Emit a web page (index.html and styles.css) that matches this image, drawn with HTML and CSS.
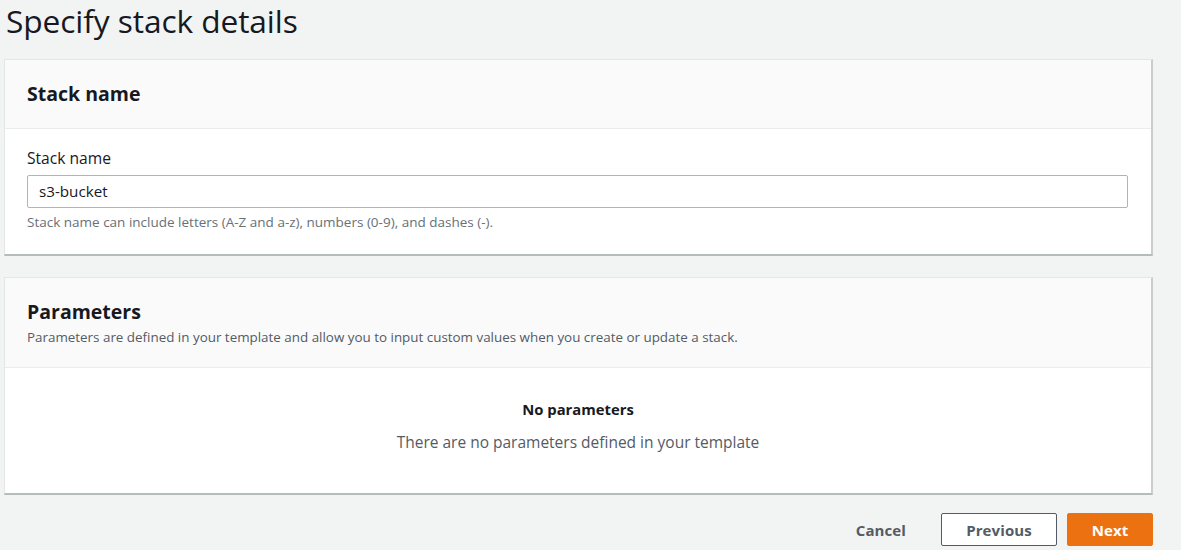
FILE: index.html
```html
<!DOCTYPE html>
<html>
<head>
<meta charset="utf-8">
<link rel="stylesheet" href="styles.css">
</head>
<body>
<div class="page">
  <h1 class="title">Specify stack details</h1>

  <section class="card">
    <div class="card-header">
      <h2 class="card-title">Stack name</h2>
    </div>
    <div class="card-body">
      <label class="field-label">Stack name</label>
      <div class="input">s3-bucket</div>
      <div class="hint">Stack name can include letters (A-Z and a-z), numbers (0-9), and dashes (-).</div>
    </div>
  </section>

  <section class="card card-params">
    <div class="card-header">
      <h2 class="card-title">Parameters</h2>
      <div class="card-desc">Parameters are defined in your template and allow you to input custom values when you create or update a stack.</div>
    </div>
    <div class="card-body empty">
      <div class="empty-title">No parameters</div>
      <div class="empty-text">There are no parameters defined in your template</div>
    </div>
  </section>

  <div class="actions">
    <button class="btn btn-link">Cancel</button>
    <button class="btn btn-normal">Previous</button>
    <button class="btn btn-primary">Next</button>
  </div>
</div>
</body>
</html>
```

FILE: styles.css
```css
html, body {
  margin: 0;
  padding: 0;
  background: #f2f3f3;
}
body {
  font-family: "Open Sans", "Noto Sans", sans-serif;
  color: #16191f;
  width: 1181px;
  height: 550px;
  overflow: hidden;
}
.page {
  padding: 0 28px 0 4px;
  width: 1149px;
}
.title {
  margin: 0;
  padding-left: 2px;
  font-size: 31.7px;
  font-weight: 400;
  line-height: 42px;
  height: 59px;
  color: #16191f;
  letter-spacing: -0.1px;
}
.card {
  background: #fff;
  border: 1px solid #e4e6e6;
  border-bottom: 2px solid #b4bcbd;
  border-right: 2px solid #c8cdcd;
  box-sizing: border-box;
}
.card-params {
  margin-top: 21px;
}
.card-header {
  background: #fafafa;
  border-bottom: 1px solid #eaeded;
  padding: 22px 22px 22px;
}
.card-title {
  margin: 0;
  font-size: 19.5px;
  font-weight: 700;
  line-height: 24px;
  color: #16191f;
}
.card-desc {
  margin-top: 5px;
  font-size: 13.4px;
  line-height: 16px;
  color: #545b64;
}
.card-body {
  padding: 19px 22px 24px 22px;
}
.field-label {
  display: block;
  font-size: 15.6px;
  line-height: 20px;
  color: #16191f;
}
.input {
  margin-top: 7px;
  margin-right: 1px;
  height: 33px;
  box-sizing: border-box;
  border: 1px solid #aab7b8;
  border-radius: 2px;
  padding: 0 11px;
  font-size: 15.2px;
  line-height: 31px;
  color: #16191f;
  background: #fff;
}
.hint {
  margin-top: 6px;
  font-size: 13.5px;
  line-height: 16px;
  color: #687078;
}
.empty {
  padding: 31px 22px 41px;
  text-align: center;
}
.empty-title {
  font-size: 14.8px;
  font-weight: 700;
  line-height: 20px;
  color: #16191f;
}
.empty-text {
  margin-top: 13px;
  font-size: 15.5px;
  line-height: 20px;
  color: #545b64;
}
.actions {
  display: flex;
  justify-content: flex-end;
  align-items: center;
  margin-top: 18px;
  gap: 10px;
}
.btn {
  font-family: inherit;
  font-size: 15px;
  font-weight: 700;
  height: 33px;
  border-radius: 2px;
  box-sizing: border-box;
  cursor: pointer;
  letter-spacing: 0.1px;
}
.btn-link {
  background: transparent;
  border: 1px solid transparent;
  color: #545b64;
  padding: 0 20px;
  margin-right: 4px;
}
.btn-normal {
  background: #fff;
  border: 1px solid #545b64;
  color: #545b64;
  width: 116px;
}
.btn-primary {
  background: #ec7211;
  border: 1px solid #ec7211;
  color: #fff;
  width: 86px;
}
```
